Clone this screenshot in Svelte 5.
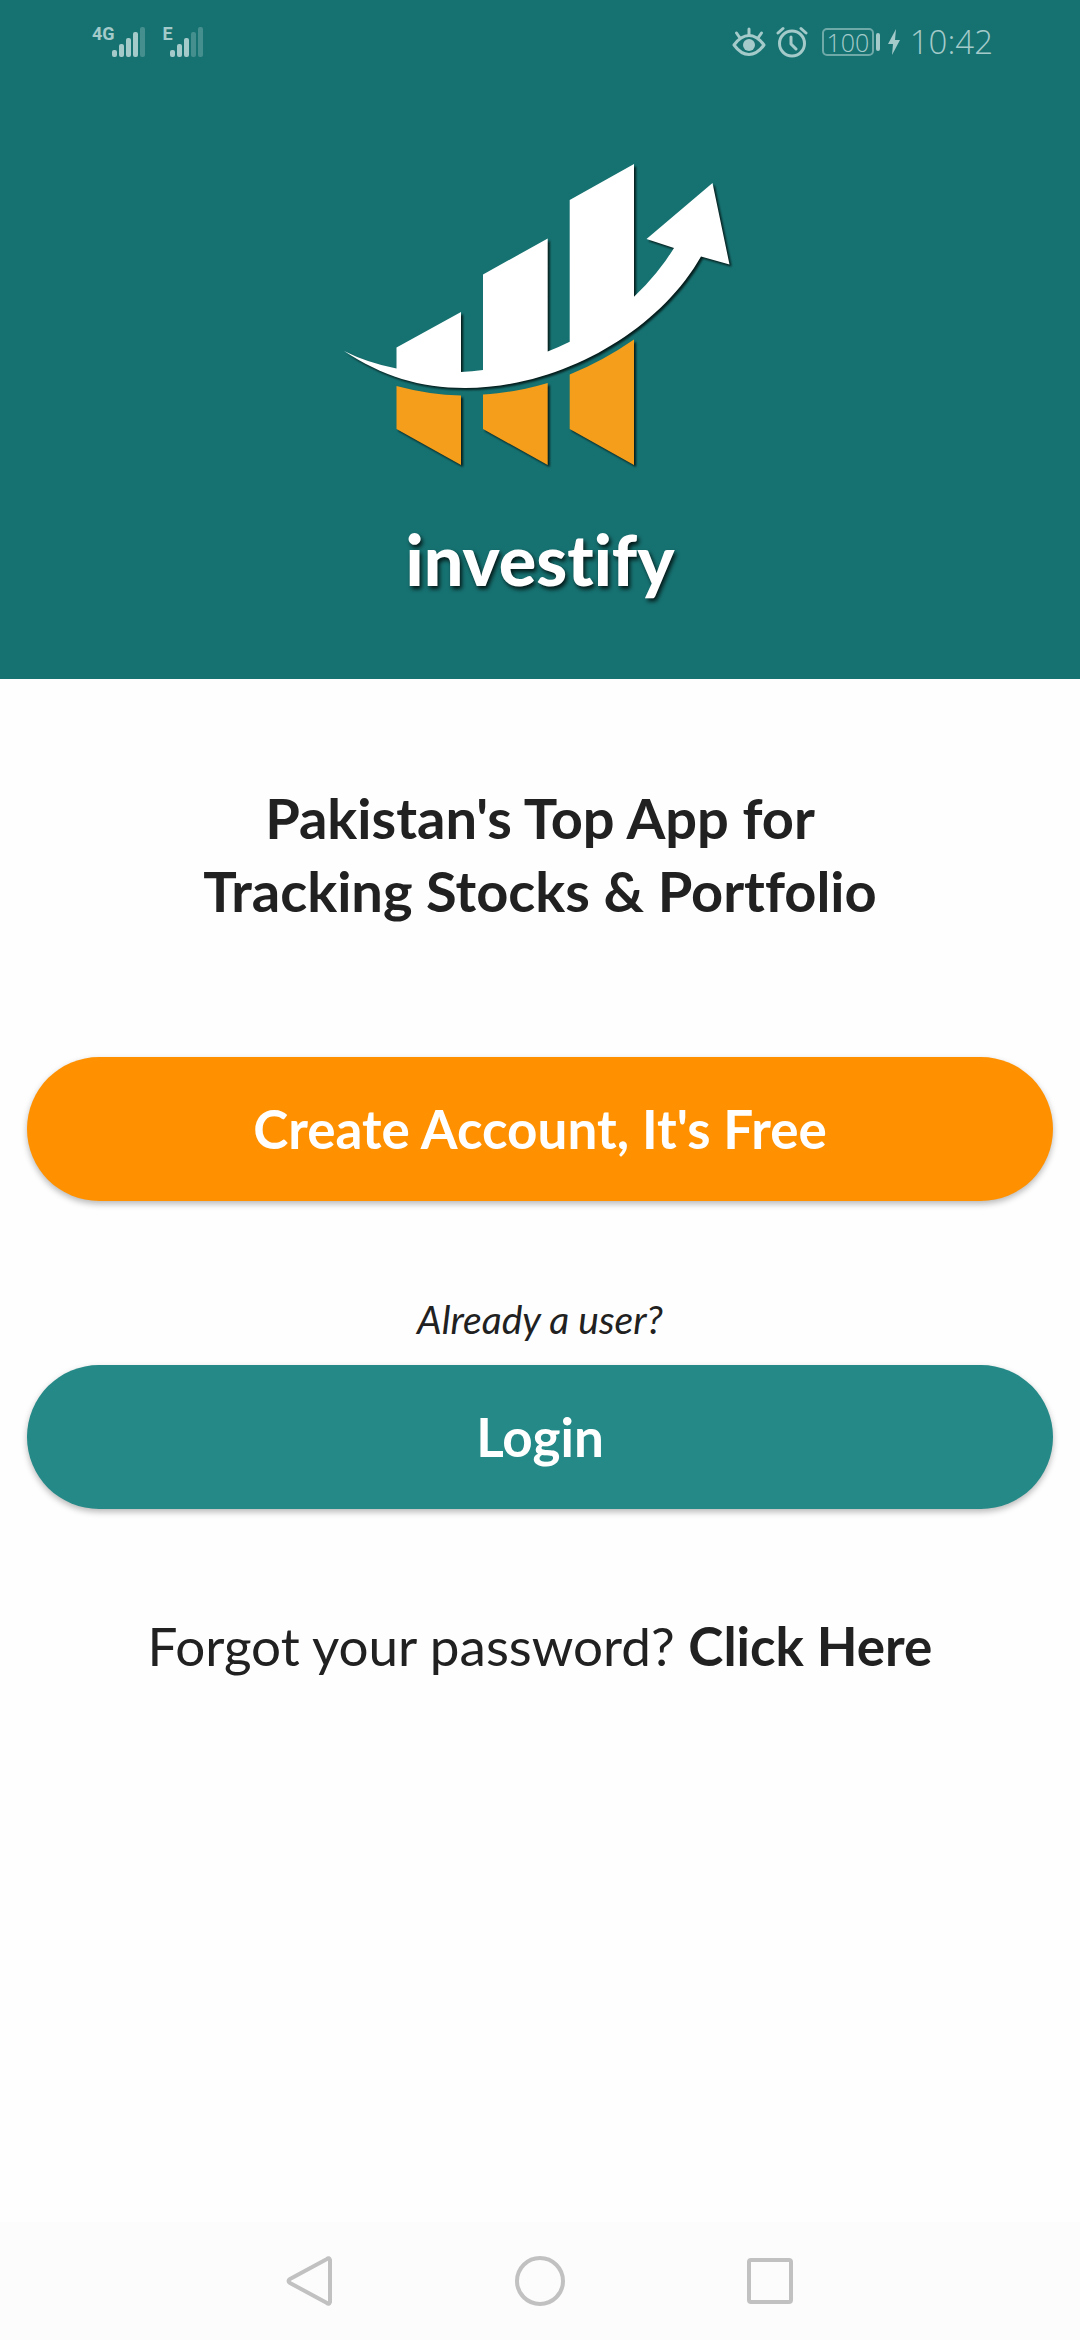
<script>
  const signals = [
    { label: '4G', strength: 4 },
    { label: 'E', strength: 3 }
  ];
  const heights = [7, 13, 19, 25, 30];
</script>

<div class="screen">
  <header>
    <div class="status">
      <div class="signals">
        {#each signals as signal}
          <div class="signal">
            <span>{signal.label}</span>
            <svg width="33" height="30" viewBox="0 0 33 30" aria-hidden="true">
              {#each heights as h, i}
                <rect class:dim={i >= signal.strength} x={i * 7} y={30 - h} width="5" height={h} rx="2" />
              {/each}
            </svg>
          </div>
        {/each}
      </div>
      <div class="system">
        <svg class="eye" width="34" height="32" viewBox="0 0 34 32" aria-hidden="true">
          <path d="M2 19Q9 9.500 17 9.500T32 19Q25 28.500 17 28.500T2 19Z" />
          <path d="M17 9V3M8 12L4.500 7M26 12L29.500 7" />
          <circle cx="17" cy="19" r="6" />
        </svg>
        <svg class="alarm" width="32" height="32" viewBox="0 0 32 32" aria-hidden="true">
          <circle cx="16" cy="17.500" r="12.500" />
          <path d="M15 11V18L20 23M2 7L7 2.500M30 7L25 2.500" />
        </svg>
        <div class="battery">
          <span class="level">100</span>
          <span class="cap"></span>
        </div>
        <svg class="bolt" width="12" height="28" viewBox="0 0 12 28" aria-hidden="true">
          <path d="M8 1L0 16H5L4 27L12 12H7Z" />
        </svg>
        <time>10:42</time>
      </div>
    </div>
    <svg class="mark" width="400" height="320" viewBox="340 155 400 320" role="img" aria-label="Rising bar chart with arrow">
      <path class="white" d="M344 351Q368 363 396.500 368.500V347.500L461 312V372Q472 371.500 483 370V274.500L547.700 238.500V351.500Q559 347 569.700 341.700V200L634 164V296.800Q658 274 674 248L646.500 239L712.500 183L729.500 264.500L701 256.500C658 332 560 388 465 388C420 388 382 376 344 351Z" />
      <path class="orange" d="M396.500 386Q430 395 461 395.500V465L396.500 429ZM483 394.500C505 393.500 528 389 547.700 383V465L483 429ZM569.700 374.500Q603 361 634 339.500V465L569.700 429Z" />
    </svg>
    <p class="brand">investify</p>
  </header>

  <main>
    <h1>Pakistan's Top App for<br />Tracking Stocks &amp; Portfolio</h1>
    <button class="create" type="button">Create Account, It's Free</button>
    <p class="already">Already a user?</p>
    <button class="login" type="button">Login</button>
    <p class="forgot">Forgot your password? <a href="#reset">Click Here</a></p>
  </main>

  <nav aria-label="System navigation">
    <button type="button" aria-label="Back">
      <svg width="52" height="52" viewBox="0 0 52 52"><path d="M43 4Q45 2 46 5V47Q45 50 43 48L6 28Q3 26 6 24Z" /></svg>
    </button>
    <button type="button" aria-label="Home">
      <svg width="52" height="52" viewBox="0 0 52 52"><circle cx="26" cy="26" r="23" /></svg>
    </button>
    <button type="button" aria-label="Recent apps">
      <svg width="52" height="52" viewBox="0 0 52 52"><rect x="5" y="5" width="42" height="42" rx="2" /></svg>
    </button>
  </nav>
</div>

<style>
  :global(body) {
    margin: 0;
    background: #fefefe;
  }
  .screen {
    display: flex;
    flex-direction: column;
    min-height: 100vh;
    color: #212121;
    font-family: Lato, "Open Sans", sans-serif;
    font-variant-ligatures: none;
  }
  header {
    display: flex;
    flex-direction: column;
    align-items: center;
    padding-bottom: 76px;
    background: #167271;
  }
  .status {
    display: flex;
    justify-content: space-between;
    align-items: center;
    box-sizing: border-box;
    width: 100%;
    height: 84px;
    padding: 0 87px 0 92px;
    color: #a4caca;
  }
  .signals {
    display: flex;
    gap: 18px;
  }
  .signal {
    display: flex;
    align-items: flex-start;
  }
  .signal span {
    margin-right: -3px;
    font: bold 18px/14px Roboto, sans-serif;
  }
  .signal rect {
    fill: #a4caca;
  }
  .signal rect.dim {
    fill: #458f8e;
  }
  .system {
    display: flex;
    align-items: center;
  }
  .system svg {
    fill: none;
    stroke: #a4caca;
    stroke-width: 3;
    stroke-linecap: round;
    stroke-linejoin: round;
  }
  .system .eye {
    margin-right: 10px;
  }
  .system .eye circle,
  .system .bolt {
    fill: #a4caca;
    stroke: none;
  }
  .system .alarm {
    margin-right: 14px;
  }
  .battery {
    display: flex;
    align-items: center;
    gap: 2px;
  }
  .level {
    box-sizing: border-box;
    width: 52px;
    height: 28px;
    border: 2px solid #6fa9a8;
    border-radius: 5px;
    font: 300 25px/24px "Open Sans", sans-serif;
    text-align: center;
  }
  .cap {
    width: 4px;
    height: 18px;
    border-radius: 2px;
    background: #a4caca;
  }
  .system .bolt {
    margin: 0 10px 0 8px;
  }
  time {
    font: 300 33px/40px "Open Sans", sans-serif;
  }
  .mark {
    margin-top: 71px;
    filter: drop-shadow(2px 2px 1px rgb(0 0 0 / 75%));
  }
  .white {
    fill: #fff;
  }
  .orange {
    fill: #f59e1c;
  }
  p,
  h1 {
    margin: 0;
    text-align: center;
  }
  .brand {
    margin-top: 40px;
    color: #fff;
    font-size: 70px;
    font-weight: 900;
    line-height: 88px;
    text-shadow: 2px 3px 4px rgb(0 0 0 / 80%);
  }
  main {
    display: flex;
    flex: 1;
    flex-direction: column;
    padding: 102px 27px 0;
  }
  h1 {
    font-size: 56px;
    font-weight: 700;
    line-height: 73px;
  }
  main button {
    height: 144px;
    border: 0;
    border-radius: 72px;
    color: #fff;
    font: 700 53px/60px Lato, sans-serif;
    box-shadow: 0 3px 6px rgb(0 0 0 / 28%);
  }
  .create {
    margin-top: 130px;
    background: #ff9100;
  }
  .already {
    margin-top: 94px;
    font-size: 39px;
    font-style: italic;
    line-height: 48px;
  }
  .login {
    margin-top: 22px;
    background: #248987;
  }
  .forgot {
    margin-top: 107px;
    font-size: 53px;
    line-height: 60px;
  }
  .forgot a {
    color: inherit;
    font-weight: 700;
    text-decoration: none;
  }
  nav {
    display: flex;
    justify-content: center;
    align-items: center;
    gap: 178px;
    height: 118px;
    background: #fcfcfc;
  }
  nav button {
    display: flex;
    padding: 0;
    border: 0;
    background: none;
  }
  nav svg {
    fill: none;
    stroke: #c1c1c1;
    stroke-width: 4;
    stroke-linejoin: round;
  }
</style>
